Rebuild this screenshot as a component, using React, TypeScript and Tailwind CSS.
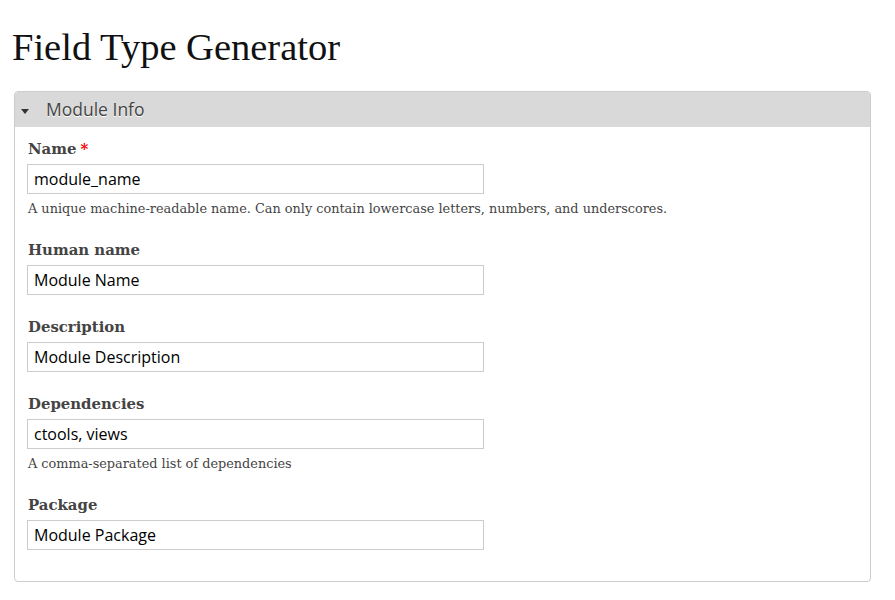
import React from 'react';

const serif = "font-['DejaVu_Serif',Georgia,serif]";
const titleSerif = "font-['Liberation_Serif',Georgia,serif]";
const sans = "font-['Open_Sans','Lucida_Grande',sans-serif]";

type Field = { label: string; value: string; required?: boolean; help?: string };

const fields: Field[] = [
  { label: 'Name', value: 'module_name', required: true, help: 'A unique machine-readable name. Can only contain lowercase letters, numbers, and underscores.' },
  { label: 'Human name', value: 'Module Name' },
  { label: 'Description', value: 'Module Description' },
  { label: 'Dependencies', value: 'ctools, views', help: 'A comma-separated list of dependencies' },
  { label: 'Package', value: 'Module Package' },
];

const FormItem: React.FC<{ field: Field }> = ({ field }) => (
  <div className="mb-[22px]">
    <label className={`${serif} block text-[14.9px] font-bold leading-[20px] text-[#444] mb-[5px] pl-px`}>
      {field.label}
      {field.required && <span className="text-[#e00] ml-1">*</span>}
    </label>
    <input
      type="text"
      defaultValue={field.value}
      className={`${sans} block w-[457px] h-[30px] border border-[#ccc] bg-white px-[6px] text-[16px] text-black outline-none`}
    />
    {field.help && (
      <div className={`${serif} mt-[6px] text-[12.85px] leading-[18px] text-[#444] pl-px`}>{field.help}</div>
    )}
  </div>
);

export default function App() {
  return (
    <div className="min-h-[600px] bg-white px-[14px] pb-4">
      <h1 className={`${titleSerif} -ml-[2px] pt-[24px] pb-[21px] text-[38.5px] leading-[46px] font-normal text-[#111]`}>
        Field Type Generator
      </h1>
      <div className="w-[857px] rounded-[4px] border border-[#ccc] overflow-hidden">
        <div className="flex items-center h-[35px] bg-[#d9d9d9] pl-[6px]">
          <svg width="8" height="5" viewBox="0 0 8 5" className="mr-[17px] mt-[4px]">
            <polygon points="0,0 8,0 4,5" fill="#333" />
          </svg>
          <span className={`${sans} text-[17.5px] text-[#444] [text-shadow:0_1px_0_#fff]`}>Module Info</span>
        </div>
        <div className="px-[12px] pt-[12px] pb-[9px]">
          {fields.map((f) => (
            <FormItem key={f.label} field={f} />
          ))}
        </div>
      </div>
    </div>
  );
}
